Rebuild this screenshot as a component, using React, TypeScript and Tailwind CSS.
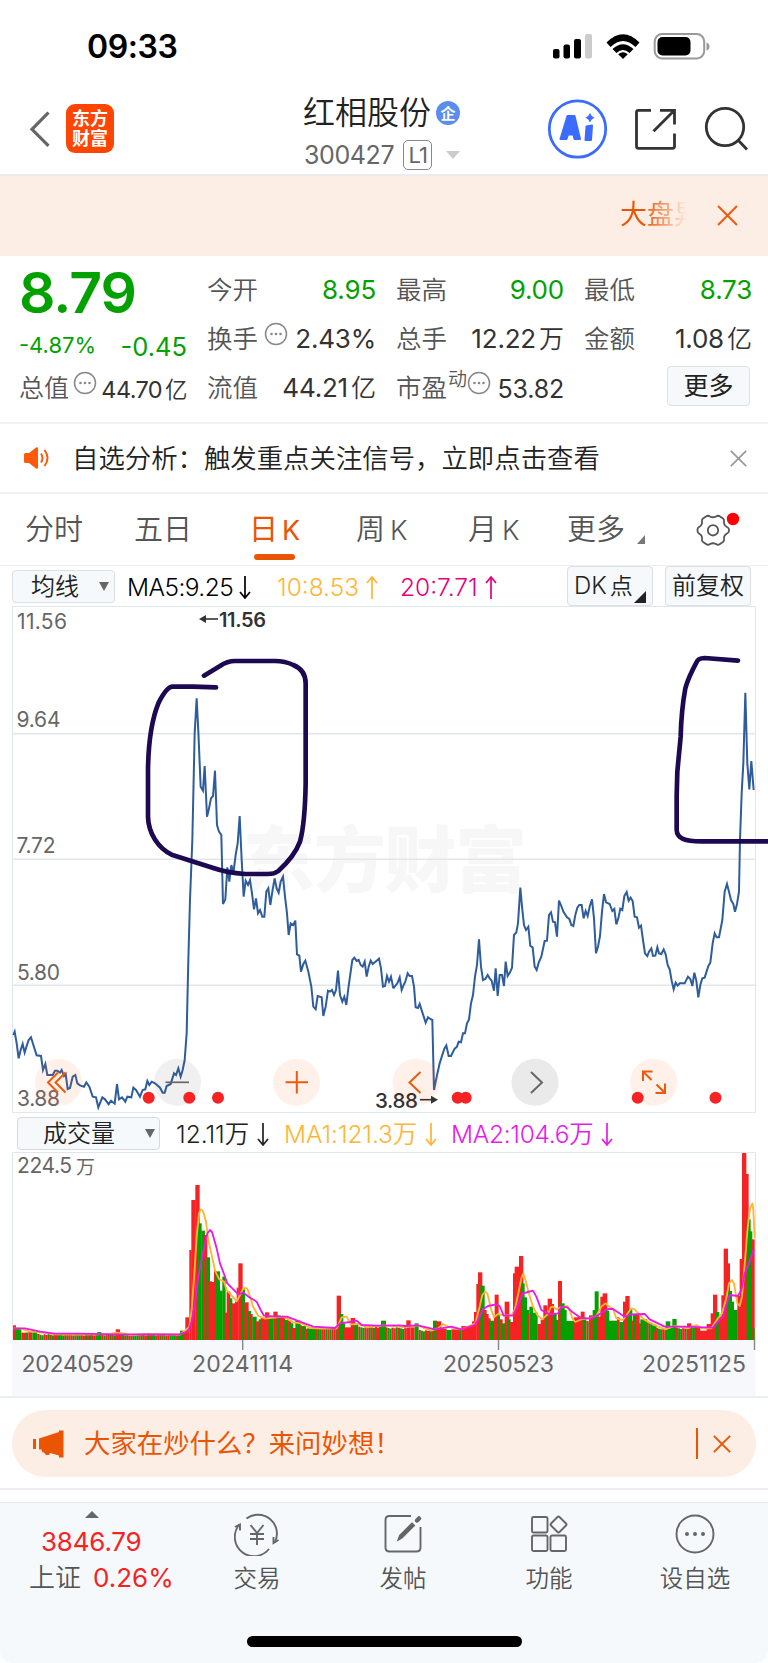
import type {ReactNode} from "react";

// Chart coordinates are kept at three units per pixel.
type Bar = [number, number, number, "r" | "g" | "m"];

const PRICE_LEFT =
    "40,525 44,515 50,550 56,595 62,570 68,552 74,578 80,558 86,540 93,532 100,555 110,586 123,588 129,630 136,612 142,645 158,645 165,632 172,632 180,638 185,630 192,648 197,642 203,687 210,684 218,650 226,645 232,670 240,676 252,680 259,667 268,680 278,710 288,712 295,742 307,712 315,718 326,733 333,722 344,731 351,672 357,718 366,712 376,725 382,710 394,712 400,683 408,690 420,710 428,690 436,688 442,663 448,675 455,665 465,670 480,683 488,698 494,698 500,678 512,672 522,640 528,645 535,625 542,650 548,630 554,600 560,520 565,300 570,120 577,-60 584,-380 590,-485 595,-385 602,-220 609,-208 614,-282 621,-130 626,-150 633,-185 639,-192 645,-268 651,-105 657,-85 664,-75 669,132 676,118 682,22 688,65 694,15 700,40 707,-15 713,-50 719,-132 725,0 731,110 737,62 744,75 750,60 756,100 762,148 768,115 774,160 780,150 787,170 793,170 799,95 805,85 811,135 817,95 824,55 830,85 836,98 842,65 849,50 855,110 861,160 866,225 872,190 880,195 886,182 891,283 898,287 903,335 910,312 916,302 925,335 934,380 940,440 947,448 953,408 965,412 970,468 977,440 984,392 990,395 996,390 1002,405 1008,390 1014,332 1020,405 1027,425 1033,410 1039,435 1045,385 1050,350 1057,300 1063,293 1070,303 1076,300 1082,315 1088,320 1094,305 1100,350 1106,320 1112,302 1118,312 1130,302 1137,296 1143,325 1149,380 1155,378 1161,348 1167,365 1173,350 1180,385";

const PRICE_RIGHT =
    "76,385 88,370 95,352 101,390 107,375 112,365 119,340 125,348 132,348 138,380 143,442 150,444 155,432 164,460 173,488 180,472 187,477 193,480 198,690 204,660 215,610 229,566 235,556 242,588 249,588 260,566 267,560 272,545 279,547 285,520 291,520 297,490 303,478 309,430 315,405 321,350 327,315 333,238 339,320 345,360 352,357 359,345 365,355 371,362 378,392 383,325 389,408 395,345 402,345 408,378 413,305 419,348 426,337 432,323 438,225 445,217 450,190 457,83 462,140 468,195 474,210 481,200 487,258 494,262 500,320 506,330 512,308 520,290 530,243 537,242 543,165 549,157 555,185 561,187 567,230 573,122 580,138 586,155 597,172 604,177 610,195 616,198 622,165 628,143 634,135 641,135 647,175 653,153 659,168 665,140 672,118 678,175 684,280 690,260 696,228 702,155 708,102 714,127 725,132 733,153 739,147 745,193 751,175 757,146 763,150 769,108 776,96 782,122 788,113 794,123 800,170 807,172 813,203 819,197 825,240 831,280 838,288 843,275 850,265 855,288 862,287 868,262 873,280 880,282 887,268 893,283 899,315 905,328 911,362 917,388 923,368 929,377 935,370 950,370 960,350 967,357 973,378 979,338 985,362 991,412 997,375 1003,355 1010,353 1021,318 1027,308 1034,250 1040,220 1046,232 1053,232 1063,180 1070,95 1077,72 1083,95 1089,120 1096,132 1101,155 1107,132 1113,95 1116,-60 1121,-200 1126,-290 1132,-502 1138,-290 1144,-212 1150,-297 1157,-210";

const BARS_LEFT: Bar[] = [
    [39, 48, 646, "r"], [48, 64, 655, "g"], [64, 85, 668, "r"], [76, 82, 668, "g"], [85, 97, 666, "r"], [97, 112, 666, "g"],
    [112, 540, 674, "m"], [292, 304, 666, "g"], [347, 360, 658, "r"], [540, 552, 662, "g"], [552, 558, 662, "r"],
    [556, 568, 622, "r"], [568, 575, 420, "r"], [574, 587, 270, "r"], [586, 599, 225, "r"], [594, 605, 340, "g"],
    [604, 615, 362, "g"], [612, 622, 375, "r"], [619, 630, 442, "g"], [625, 636, 514, "r"], [635, 645, 516, "r"],
    [642, 648, 480, "r"], [647, 660, 484, "g"], [660, 668, 542, "g"], [667, 677, 500, "g"], [674, 681, 608, "r"],
    [680, 691, 545, "r"], [688, 697, 565, "g"], [694, 706, 580, "r"], [705, 712, 575, "r"], [710, 716, 533, "r"],
    [715, 728, 460, "r"], [723, 735, 538, "g"], [733, 746, 577, "r"], [743, 753, 603, "g"], [749, 758, 612, "r"],
    [757, 770, 620, "g"], [768, 778, 634, "r"], [776, 784, 628, "g"], [782, 796, 624, "r"], [795, 808, 607, "r"],
    [806, 821, 622, "g"], [820, 833, 605, "r"], [830, 842, 616, "g"], [840, 855, 618, "r"], [853, 866, 630, "g"],
    [864, 874, 632, "r"], [870, 880, 640, "g"], [876, 888, 654, "r"], [886, 902, 632, "g"], [900, 906, 646, "r"],
    [904, 918, 648, "g"], [914, 925, 656, "r"], [922, 945, 655, "g"], [945, 1012, 655, "m"], [1010, 1023, 557, "r"],
    [1020, 1030, 612, "g"], [1028, 1035, 640, "g"], [1032, 1053, 652, "r"], [1052, 1066, 624, "r"], [1063, 1075, 645, "g"],
    [1075, 1145, 652, "m"], [1143, 1158, 632, "g"], [1156, 1200, 654, "m"],
];

const BARS_RIGHT: Bar[] = [
    [90, 116, 655, "m"], [115, 128, 631, "r"], [128, 140, 652, "r"], [140, 152, 640, "g"], [152, 196, 662, "m"],
    [195, 207, 632, "g"], [205, 220, 634, "r"], [218, 236, 656, "r"], [235, 250, 660, "g"], [250, 276, 658, "r"],
    [275, 281, 656, "g"], [280, 313, 648, "r"], [312, 320, 634, "r"], [318, 326, 606, "r"], [325, 333, 522, "r"],
    [330, 343, 487, "r"], [337, 350, 527, "g"], [347, 356, 600, "r"], [354, 362, 612, "r"], [360, 368, 625, "r"],
    [366, 380, 632, "g"], [378, 384, 620, "r"], [380, 392, 554, "r"], [387, 396, 612, "g"], [394, 404, 628, "r"],
    [402, 412, 640, "g"], [410, 424, 575, "r"], [419, 428, 628, "g"], [426, 436, 636, "r"], [435, 442, 490, "r"],
    [440, 454, 470, "r"], [453, 466, 438, "r"], [460, 470, 520, "g"], [468, 477, 562, "g"], [475, 484, 600, "g"],
    [478, 484, 612, "r"], [484, 495, 590, "g"], [493, 509, 608, "g"], [508, 520, 642, "r"], [518, 528, 630, "r"],
    [526, 538, 586, "r"], [534, 541, 605, "g"], [539, 552, 566, "r"], [550, 558, 582, "r"], [554, 566, 612, "g"],
    [562, 572, 630, "g"], [570, 582, 513, "r"], [577, 590, 580, "g"], [588, 596, 600, "g"], [593, 620, 633, "g"],
    [618, 632, 622, "r"], [630, 640, 620, "r"], [638, 650, 605, "r"], [644, 655, 622, "g"], [655, 665, 635, "m"],
    [663, 675, 616, "r"], [674, 684, 600, "g"], [680, 692, 544, "g"], [690, 700, 620, "r"], [697, 706, 560, "r"],
    [704, 718, 550, "r"], [712, 724, 602, "g"], [722, 748, 632, "g"], [747, 755, 622, "r"], [754, 768, 636, "g"],
    [765, 775, 575, "r"], [772, 785, 558, "r"], [779, 793, 598, "g"], [790, 800, 632, "r"], [795, 805, 615, "g"],
    [803, 815, 612, "r"], [810, 822, 640, "r"], [817, 838, 628, "g"], [836, 852, 640, "m"], [850, 866, 646, "g"],
    [858, 866, 665, "r"], [864, 895, 656, "m"], [893, 907, 634, "g"], [905, 915, 650, "g"], [913, 926, 627, "g"],
    [924, 957, 655, "m"], [957, 970, 640, "r"], [962, 997, 652, "m"], [995, 1018, 662, "r"], [1016, 1030, 642, "r"],
    [1028, 1038, 610, "r"], [1035, 1048, 554, "r"], [1043, 1054, 606, "g"], [1052, 1062, 620, "r"], [1060, 1068, 556, "r"],
    [1067, 1080, 416, "r"], [1075, 1086, 460, "r"], [1080, 1092, 543, "g"], [1088, 1098, 575, "g"], [1096, 1109, 600, "g"],
    [1108, 1116, 558, "r"], [1115, 1124, 447, "r"], [1122, 1135, 129, "r"], [1133, 1142, 192, "r"], [1136, 1148, 328, "g"],
    [1145, 1153, 364, "g"], [1150, 1160, 388, "r"], [1154, 1160, 655, "g"],
];

const MA1_LEFT =
    "40,655 60,655 90,665 130,668 165,673 240,674 330,672 350,668 370,670 390,675 440,672 540,674 555,662 568,650 575,600 583,490 590,380 597,310 601,300 604,298 608,302 611,310 618,335 625,390 635,435 646,485 658,508 672,515 680,540 700,562 710,574 720,555 728,538 735,534 742,536 750,560 760,592 775,618 795,626 830,622 850,620 880,637 905,640 930,654 970,656 1010,655 1018,638 1025,622 1040,620 1052,643 1075,642 1100,652 1150,646 1200,650";
const MA1_RIGHT =
    "96,650 110,652 150,646 170,655 190,662 210,655 225,642 245,652 280,658 322,640 335,590 343,555 352,545 358,550 370,600 378,622 390,612 410,617 430,615 440,600 450,555 460,505 466,490 474,515 482,548 495,590 508,615 522,628 540,612 548,592 555,590 565,598 578,592 598,588 606,605 615,628 622,636 640,628 665,625 685,618 700,590 712,580 722,588 735,597 745,625 765,630 778,612 790,595 800,598 815,615 830,630 850,640 870,650 892,658 920,648 945,652 960,655 985,645 1000,655 1030,655 1050,625 1062,610 1075,565 1083,520 1092,510 1098,520 1108,580 1115,588 1122,560 1130,465 1138,365 1145,300 1153,280 1156,300 1160,385";
const MA2_LEFT =
    "40,655 75,655 120,665 165,671 240,671 340,673 540,673 565,663 575,635 585,580 595,500 610,425 622,370 630,360 636,366 650,415 660,460 672,492 682,520 700,538 715,553 730,548 748,562 770,575 782,600 792,617 830,620 860,620 900,635 940,650 1005,654 1020,640 1050,636 1070,632 1085,645 1130,647 1200,646";
const MA2_RIGHT =
    "96,646 110,648 150,646 200,658 250,650 280,658 320,645 330,630 345,598 360,588 385,583 395,588 407,617 435,617 450,585 465,550 480,546 495,542 505,560 520,600 545,613 570,610 580,590 598,592 612,605 640,625 670,625 690,615 720,597 735,597 770,620 790,613 830,612 845,628 870,640 890,650 950,650 1035,653 1050,635 1065,620 1075,585 1085,555 1110,558 1120,540 1130,490 1145,455 1155,422 1160,422";

const FONT = "Inter, 'Noto Sans CJK SC', sans-serif";
const STRIPES = "rggrrgrgrrgggrgrrg";

function barRects(bars: Bar[]) {
    return bars.flatMap(([x0, x1, top, kind]) => {
        if (kind !== "m") return [{x: x0, w: x1 - x0, top, up: kind === "r"}];
        const out = [];
        for (let x = x0, i = 0; x < x1; x += 6.2, i++) {
            out.push({
                x,
                w: Math.min(6.4, x1 - x),
                top: top + ((i * 7) % 5) - 2,
                up: STRIPES[i % STRIPES.length] === "r",
            });
        }
        return out;
    });
}

function Bars({bars}: { bars: Bar[] }) {
    return (
        <>
            {barRects(bars).map((b, i) => (
                <rect key={i} x={b.x} y={b.top} width={b.w} height={690 - b.top} fill={b.up ? "#f52323" : "#03a100"}/>
            ))}
        </>
    );
}

function Label({x, y, w, size = 21, fill = "#666", weight = 400, children}: {
    x: number; y: number; w: number; size?: number; fill?: string; weight?: number; children: string;
}) {
    return (
        <text x={x} y={y} textLength={w} fontSize={size} fill={fill} fontWeight={weight} fontFamily={FONT}>
            {children}
        </text>
    );
}

function PriceChart() {
    const knobs = [
        {x: 58.5, fill: "rgba(255,110,40,0.1)"},
        {x: 177.5, fill: "rgba(90,90,90,0.09)"},
        {x: 296.5, fill: "rgba(255,110,40,0.1)"},
        {x: 416, fill: "rgba(255,110,40,0.1)"},
        {x: 535, fill: "rgba(90,90,90,0.13)"},
        {x: 653.5, fill: "rgba(255,110,40,0.1)"},
    ];
    return (
        <svg width="768" height="507" viewBox="0 606 768 507" className="block">
            <text x="243" y="886" textLength="284" fontSize="72" fontWeight="900" fill="#f7f7f8" fontFamily={FONT}>东方财富</text>
            <g fill="none" stroke="#e1e6ea">
                <rect x="12.5" y="606.5" width="743" height="506"/>
                <path d="M12 733.7H755M12 859.3H755M12 985.2H755" stroke="#e2e6ee" strokeWidth="1.4"/>
            </g>
            <Label x={17} y={629} w={50}>11.56</Label>
            <Label x={16.5} y={726.5} w={44}>9.64</Label>
            <Label x={16.5} y={853} w={39}>7.72</Label>
            <Label x={17} y={979.5} w={43}>5.80</Label>
            <Label x={17} y={1105.5} w={43}>3.88</Label>
            <Label x={219} y={626.5} w={47} size={20} fill="#333" weight={600}>11.56</Label>
            <path d="M203 619h15" stroke="#333" strokeWidth="1.6"/>
            <path d="M199 619l7-4v8z" fill="#333"/>
            <g transform="translate(0 860) scale(.33333)" fill="none" stroke="#2f5c9b" strokeWidth="6" strokeLinejoin="miter">
                <polyline points={PRICE_LEFT}/>
                <polyline points={PRICE_RIGHT} transform="translate(1104 0)"/>
            </g>
            {knobs.map((k) => (
                <circle key={k.x} cx={k.x} cy="1082.3" r="23.5" fill={k.fill}/>
            ))}
            <Label x={375} y={1107.5} w={43} size={20.5} fill="#333" weight={500}>3.88</Label>
            <path d="M420 1099.7h13" stroke="#333" strokeWidth="1.6"/>
            <path d="M438 1099.7l-7-4v8z" fill="#333"/>
            <g fill="none" stroke="#ed5a0c" strokeWidth="2">
                <path d="M58 1072.5l-10 10 10 10M65.5 1072.5l-10 10 10 10"/>
                <path d="M285.5 1082.3h22.5M296.8 1071v22.5"/>
                <path d="M420.5 1072l-11 10.5 11 10.5"/>
                <path d="M652.5 1071.5H643v9.5M643.5 1072l8 8M655.5 1093h9.5v-9.5M664.5 1092.5l-8-8"/>
            </g>
            <g fill="none" stroke="#666" strokeWidth="1.7">
                <path d="M165.5 1082.3h23.5"/>
                <path d="M531 1072l11 10.5-11 10.5" strokeWidth="2"/>
            </g>
            {[148.7, 189.3, 218, 457.7, 465.7, 637.7, 715.5].map((x) => (
                <circle key={x} cx={x} cy="1097.7" r="6" fill="#f52323"/>
            ))}
            <g transform="translate(0 600) scale(.33333)" fill="none" stroke="#1c0951" strokeWidth="14" strokeLinecap="round" strokeLinejoin="round">
                <path d="M612 227L660 198Q682 183 705 183H825Q855 183 880 195Q917 210 917 250V550Q915 670 900 725C885 765 855 795 835 813Q822 823 800 822H735Q680 818 640 804L515 764C475 745 445 700 444 650V510C445 430 455 360 475 310Q500 260 518 260H580L648 262"/>
                <path d="M2214 182L2114 174Q2094 174 2089 188Q2064 235 2056 265C2044 330 2043 370 2042 410L2032 515L2030 590V690C2031 715 2054 724 2104 724H2320"/>
            </g>
        </svg>
    );
}

function VolumeChart() {
    return (
        <svg width="768" height="244" viewBox="0 1152 768 244" className="block">
            <rect x="12" y="1340" width="743.5" height="56" fill="#f7f8fb"/>
            <path d="M12.5 1340V1152.5H755.5V1340" fill="none" stroke="#e1e6ea"/>
            <g transform="translate(0 1110) scale(.33333)">
                <Bars bars={BARS_LEFT}/>
                <g transform="translate(1104 0)"><Bars bars={BARS_RIGHT}/></g>
                <g fill="none" strokeWidth="5.5" strokeLinejoin="round">
                    <polyline points={MA1_LEFT} stroke="#ffb534"/>
                    <polyline points={MA1_RIGHT} stroke="#ffb534" transform="translate(1104 0)"/>
                    <polyline points={MA2_LEFT} stroke="#e81ae8"/>
                    <polyline points={MA2_RIGHT} stroke="#e81ae8" transform="translate(1104 0)"/>
                </g>
            </g>
            <Label x={17} y={1173} w={55}>224.5</Label>
            <Label x={76} y={1173.5} w={19} size={19}>万</Label>
            <path d="M242.7 1340v10M498.5 1340v10M754.5 1340v10" stroke="#888" strokeWidth="1.4"/>
            <Label x={21.5} y={1372} w={112} size={23}>20240529</Label>
            <Label x={192} y={1372} w={101} size={23}>20241114</Label>
            <Label x={443} y={1372} w={111} size={23}>20250523</Label>
            <Label x={642} y={1372} w={104} size={23}>20251125</Label>
        </svg>
    );
}

function StatusBar() {
    return (
        <div className="flex h-[92px] items-center justify-between pl-[87px] pr-[58px]">
            <span className="mt-[2px] text-[32px] leading-none font-semibold tracking-[-0.4px] text-black">09:33</span>
            <svg width="158" height="30" viewBox="552 30 158 30">
                <rect x="553" y="48" width="6.5" height="9.5" rx="2"/>
                <rect x="563.5" y="43.5" width="6.5" height="14" rx="2"/>
                <rect x="574" y="38" width="7" height="19.5" rx="2"/>
                <rect x="585" y="33" width="7" height="24.5" rx="2" fill="#ccc"/>
                <path d="M606.5 41.5Q623 25 639.5 41.5l-4 4.5Q623 34 610.5 46z"/>
                <path d="M612.5 48Q623 38.5 633.5 48l-4 4Q623 46 616.5 52z"/>
                <path d="M618.2 53.2Q623 49.5 627.8 53.2L623 58z"/>
                <rect x="654.7" y="33" width="49.5" height="24.5" rx="7.5" fill="none" stroke="#999" strokeWidth="2"/>
                <rect x="657.5" y="36" width="33" height="18.5" rx="5"/>
                <path d="M706.5 41.5q3 1 3 4t-3 4z" fill="#999"/>
            </svg>
        </div>
    );
}

function Header() {
    return (
        <header className="flex h-[84px] items-start border-b-2 border-[#ececee]">
            <svg width="24" height="40" viewBox="0 0 24 40" className="mt-[17px] ml-[28px] shrink-0" fill="none" stroke="#666" strokeWidth="3.2">
                <path d="M20.5 3.5L4 20.3l16.5 16.5"/>
            </svg>
            <div className="mt-[12px] ml-[14px] flex h-[49px] w-[48px] shrink-0 flex-col items-center justify-center rounded-[9px] bg-[#ff4500] text-[18px] leading-[20px] font-bold text-white">
                <span>东方</span>
                <span>财富</span>
            </div>
            <div className="mt-[1px] ml-[189px] w-[243px] shrink-0">
                <div className="flex h-[40px] items-center">
                    <span className="text-[32px] leading-none font-[350] text-[#222]">红相股份</span>
                    <span className="ml-[5px] flex size-[24px] items-center justify-center rounded-full bg-[#5b8def] text-[15px] leading-none font-bold text-white">企</span>
                </div>
                <div className="mt-[6px] flex h-[32px] items-center text-[#666]">
                    <span className="ml-[1px] text-[25px] leading-none tracking-[-0.4px]">300427</span>
                    <span className="ml-[9px] flex h-[30px] w-[29px] items-center justify-center rounded-[5px] border border-[#888] text-[22px] leading-none tracking-[-1px]">L1</span>
                    <svg width="14" height="8" className="ml-[14px]" fill="#ccc">
                        <path d="M0 0h14L7 8z"/>
                    </svg>
                </div>
            </div>
            <svg width="204" height="62" viewBox="546 98 204 62" className="mt-[6px] shrink-0" fill="none">
                <circle cx="577.5" cy="129" r="28.2" stroke="#3c6bff" strokeWidth="2.8"/>
                <path d="M560.5 139l7-23h7l5.5 23h-5.500l-1-4.500h-5.500l-1.500 4.500zM569.500 130.500h3l-1-6z" fill="#3c6bff" stroke="#3c6bff" strokeWidth="2" strokeLinejoin="round" fillRule="evenodd"/>
                <path d="M586.500 126.500l5.500-1-1 14.500h-5.500z" fill="#3c6bff" stroke="#3c6bff" strokeWidth="2" strokeLinejoin="round"/>
                <path d="M590 113q1.200 3.500 4.500 4.700-3.300 1.300-4.500 4.800-1.200-3.500-4.500-4.800 3.300-1.200 4.500-4.700z" fill="#3c6bff"/>
                <g stroke="#333" strokeWidth="2.8">
                    <path d="M651 110.300H638.500q-2 0-2 2v34q0 2 2 2h34q2 0 2-2V133.500"/>
                    <path d="M660 110.300H674.500V124.500M674 110.800l-20.500 20.500"/>
                    <circle cx="725" cy="127" r="18.700"/>
                    <path d="M737.500 139.500l9.500 10"/>
                </g>
            </svg>
        </header>
    );
}

function Cross({size, color, width = 2}: { size: number; color: string; width?: number }) {
    return (
        <svg width={size} height={size} viewBox="0 0 20 20" fill="none" stroke={color} strokeWidth={width}>
            <path d="M1 1l18 18M19 1L1 19"/>
        </svg>
    );
}

function Dots() {
    return (
        <svg width="24" height="24" viewBox="0 0 24 24" className="-mt-[10px] shrink-0">
            <circle cx="12" cy="12" r="10.500" fill="none" stroke="#888" strokeWidth="1.500"/>
            <g fill="#888">
                <circle cx="7.500" cy="12" r="1.300"/>
                <circle cx="12" cy="12" r="1.300"/>
                <circle cx="16.500" cy="12" r="1.300"/>
            </g>
        </svg>
    );
}

function Cell({label, value, green}: { label: ReactNode; value: ReactNode; green?: boolean }) {
    return (
        <div className="flex h-[49px] items-center justify-between whitespace-nowrap">
            <span className="-ml-px flex items-center text-[25.500px] leading-none font-[350] text-[#555]">{label}</span>
            <span className={`flex items-baseline text-[26px] leading-none tracking-[-0.200px] ${green ? "text-[#03a100]" : "text-[#333]"}`}>
                {value}
            </span>
        </div>
    );
}

function Cn({children}: { children: string }) {
    return <span className="ml-[3px] text-[25px] font-[350] tracking-normal">{children}</span>;
}

function Quote() {
    return (
        <section className="flex h-[166px] gap-[21px] pl-[20px]">
            <div className="w-[167px] whitespace-nowrap">
                <div className="mt-[6px] -ml-[1px] flex h-[60px] items-center text-[57px] leading-none font-semibold tracking-[-1px] text-[#03a100]">8.79</div>
                <div className="mt-[2px] -ml-px flex h-[42px] items-center justify-between leading-none text-[#03a100]">
                    <span className="text-[22px]">-4.87%</span>
                    <span className="mt-[3px] text-[25.500px]">-0.45</span>
                </div>
                <div className="-ml-px flex h-[44px] items-center justify-between">
                    <span className="text-[25px] leading-none font-[350] text-[#555]">总值</span>
                    <Dots/>
                    <span className="mt-[4px] text-[23.500px] leading-none tracking-[-0.600px] text-[#333]">44.70<span className="ml-[3px] text-[22.500px] font-[350]">亿</span></span>
                </div>
            </div>
            <div className="w-[168px] pt-[9px]">
                <Cell label="今开" value="8.95" green/>
                <Cell label={<>换手<span className="ml-[6px] flex"><Dots/></span></>} value="2.43%"/>
                <Cell label="流值" value={<>44.21<Cn>亿</Cn></>}/>
            </div>
            <div className="w-[167px] pt-[9px]">
                <Cell label="最高" value="9.00" green/>
                <Cell label="总手" value={<>12.22<Cn>万</Cn></>}/>
                <Cell
                    label={<>市盈<span className="-mt-[16px] ml-[1px] text-[19px]">动</span><Dots/></>}
                    value={<span className="mt-[3px] text-[25px]">53.82</span>}
                />
            </div>
            <div className="w-[167px] pt-[9px]">
                <Cell label="最低" value="8.73" green/>
                <Cell label="金额" value={<>1.08<Cn>亿</Cn></>}/>
                <button className="mt-[3px] ml-[82px] flex h-[40px] w-[83px] items-center justify-center rounded-[4px] border border-[#dde2e7] bg-[#f5f9fb] text-[25px] leading-none text-[#222]">更多</button>
            </div>
        </section>
    );
}

function Notice() {
    return (
        <div className="flex h-[72px] items-center border-y-2 border-[#f2f2f4] pl-[23px] pr-[21px]">
            <svg width="27" height="24" viewBox="0 0 27 24">
                <path d="M1 8.500Q1 7 2.500 7H6l7-5.500q2-1 2 1v19q0 2-2 1L6 17H2.500Q1 17 1 15.500z" fill="#ff5a0a"/>
                <path d="M18 7.500q3 4.500 0 9M21.500 4q6 8 0 16" fill="none" stroke="#ff5a0a" strokeWidth="2"/>
            </svg>
            <span className="ml-[22px] text-[26.400px] leading-none font-[350] text-[#222]">自选分析：触发重点关注信号，立即点击查看</span>
            <span className="ml-auto"><Cross size={17} color="#999"/></span>
        </div>
    );
}

function Tabs() {
    return (
        <nav className="flex h-[72px] items-start border-b border-[#eeeef0] pt-[20px] pl-[25px] text-[29px] leading-[32px] font-[350] whitespace-nowrap text-[#555]">
            <span className="w-[109px]">分时</span>
            <span className="w-[115px]">五日</span>
            <span className="flex w-[107px] flex-col font-normal text-[#ea5504]">
                <span>日<span className="ml-[4px] text-[27px]">K</span></span>
                <span className="mt-[7px] ml-[5px] h-[6px] w-[41px] rounded-[3px] bg-[#ea5504]"/>
            </span>
            <span className="w-[112px]">周<span className="ml-[5px] text-[27px]">K</span></span>
            <span className="w-[99px]">月<span className="ml-[5px] text-[27px]">K</span></span>
            <span className="flex w-[128px] items-end">更多
                <svg width="8" height="9" className="mb-[2px] ml-[12px]" fill="#777"><path d="M8 0v9H0z"/></svg>
            </span>
            <svg width="48" height="42" viewBox="695 508 48 42" className="-mt-[5px]">
                <g fill="none" stroke="#555" strokeWidth="1.800">
                    <path d="M706 515.500q2-1.500 4 0 3 1.500 6 0 2-1.500 4 0l3 2q1.500 1 1 3-.500 3.500 3 5.500 2 1 2 2.500v1.500q0 1.500-2 2.500-3.500 2-3 5.500.500 2-1 3l-3 2q-2 1.500-4 0-3-1.500-6 0-2 1.500-4 0l-3-2q-1.500-1-1-3 .500-3.500-3-5.500-1.500-1-1.500-2.500v-1.500q0-1.500 1.500-2.500 3.500-2 3-5.500-.500-2 1-3z"/>
                    <circle cx="713" cy="529.300" r="5.200"/>
                </g>
                <circle cx="733" cy="518" r="6.200" fill="#f00"/>
            </svg>
        </nav>
    );
}

function Arrow({up}: { up?: boolean }) {
    return (
        <svg width="12" height="23" viewBox="0 0 12 23" fill="none" stroke="currentColor" strokeWidth="1.700" className="shrink-0">
            <path d={up ? "M6 23V1M1 7l5-6 5 6" : "M6 0v22M1 16l5 6 5-6"}/>
        </svg>
    );
}

function AverageRow() {
    return (
        <div className="flex h-[40px] items-start pl-[12px] text-[24.500px] leading-none whitespace-nowrap">
            <div className="mt-[4px] flex h-[33px] w-[103px] items-center rounded-[4px] border border-[#dbe0e5] bg-[#f5f9fb] pl-[18px] text-[24px] font-[350] text-[#222]">
                均线
                <svg width="10" height="9" className="ml-[20px]" fill="#666"><path d="M0 0h10L5 9z"/></svg>
            </div>
            <div className="mt-[9px] ml-[12px] flex h-[24px] w-[150px] items-center text-black">
                <span className="mr-[6px] font-[350] tracking-[-0.550px]">MA5:9.25</span><Arrow/>
            </div>
            <div className="mt-[9px] flex h-[24px] w-[123px] items-center text-[#ffb534]">
                <span className="mr-[7px] font-[350]">10:8.53</span><Arrow up/>
            </div>
            <div className="mt-[9px] flex h-[24px] w-[167px] items-center text-[#e4007f]">
                <span className="mr-[7px] font-[350]">20:7.71</span><Arrow up/>
            </div>
            <div className="flex h-[40px] w-[86px] items-center rounded-[4px] border border-[#dbe0e5] bg-[#f5f9fb] pl-[6px] font-[350] text-[#222]">
                <span className="text-[24px]">DK</span><span className="ml-[3px] text-[23px]">点</span>
                <svg width="12" height="12" className="mt-[22px] ml-[1px]" fill="#222"><path d="M12 0v12H0z"/></svg>
            </div>
            <div className="ml-[12px] flex h-[40px] w-[86px] items-center justify-center rounded-[4px] border border-[#dbe0e5] bg-[#f5f9fb] text-[24px] font-[350] text-[#222]">
                前复权
            </div>
        </div>
    );
}

function VolumeRow() {
    return (
        <div className="flex h-[39px] items-start pl-[17px] text-[24.500px] leading-none font-[350] whitespace-nowrap">
            <div className="mt-[4px] flex h-[33px] w-[143px] items-center rounded-[4px] border border-[#d5dadf] bg-[#f5f9fb] pl-[25px] text-[24px] text-[#222]">
                成交量
                <svg width="10" height="9" className="ml-[30px]" fill="#666"><path d="M0 0h10L5 9z"/></svg>
            </div>
            <div className="mt-[9px] ml-[16px] flex h-[24px] w-[108px] items-center text-[#222]">
                <span className="mr-[8px]">12.11万</span><Arrow/>
            </div>
            <div className="mt-[9px] flex h-[24px] w-[167px] items-center text-[#ffb534]">
                <span className="mr-[8px] tracking-[-0.100px]">MA1:121.3万</span><Arrow/>
            </div>
            <div className="mt-[9px] flex h-[24px] items-center text-[#e81ae8]">
                <span className="mr-[8px] tracking-[-0.300px]">MA2:104.6万</span><Arrow/>
            </div>
        </div>
    );
}

function AskBar() {
    return (
        <div className="h-[94px] border-y-2 border-[#eceef2] pt-[12px] pl-[12px]">
            <div className="flex h-[67px] w-[743.500px] items-center rounded-full bg-[#fdeee5] pl-[20px] text-[#ea5504]">
                <svg width="32" height="28" viewBox="0 0 32 28" fill="#ea5504">
                    <path d="M1 9h3v10H1zM7 8.500L27 2V.500h4.500v27H27v-2l-9-2.500-1 2h-3l-2-2.500h-1.500l-1-3H7z"/>
                </svg>
                <span className="ml-[20px] text-[26.400px] leading-none">大家在炒什么？来问妙想！</span>
                <span className="ml-auto h-[31px] w-[2px] bg-[#ea5504]"/>
                <span className="mr-[25px] ml-[15px]"><Cross size={18} color="#ea5504" width={2.2}/></span>
            </div>
        </div>
    );
}

function NavItem({label, children}: { label: string; children: ReactNode }) {
    return (
        <div className="flex w-[146px] flex-col items-center">
            <svg width="46" height="44" viewBox="-23 -22 46 44" className="mt-[9px]" fill="none" stroke="#666" strokeWidth="1.900">
                {children}
            </svg>
            <span className="mt-[11px] text-[23.500px] leading-[24px] font-[350] text-[#555]">{label}</span>
        </div>
    );
}

function BottomNav() {
    return (
        <footer className="h-[161px] rounded-b-[12px] border-t border-[#e6e9ec] bg-[#f5f9fb]">
            <div className="flex h-[133px]">
                <div className="flex w-[184px] flex-col">
                    <svg width="14" height="7" className="mt-[8px] ml-[85px]" fill="#666"><path d="M7 0l7 7H0z"/></svg>
                    <span className="mt-[11px] ml-[41px] text-[26px] leading-[26px] tracking-[-0.200px] text-[#f52323]">3846.79</span>
                    <span className="mt-[10px] ml-[29px] flex items-center text-[26px] leading-[26px] font-[350] text-[#555]">上证
                        <span className="ml-[12px] font-normal text-[#f52323]">0.26%</span>
                    </span>
                </div>
                <NavItem label="交易">
                    <path d="M-10.500-15.500A19 19 0 0 1 18 8M12 15A19 19 0 0 1-18-9"/>
                    <path d="M-22-7l5-2.500 0 6M21.500 6l-5 3 0-6"/>
                    <path d="M-6.500-9L0-1l6.500-8M0-1v12M-7 0H7M-7 5H7" strokeWidth="1.900"/>
                </NavItem>
                <NavItem label="发帖">
                    <path d="M8-18H-13.500q-4 0-4 4V13.500q0 4 4 4H13.500q4 0 4-4V-7"/>
                    <path d="M-4.500 5.500L-3 1.500 9-10.500l2 2L-1 3.500z" fill="#666"/>
                    <path d="M14-13.500l2-2" strokeWidth="4.500" strokeLinecap="round"/>
                </NavItem>
                <NavItem label="功能">
                    <rect x="-17" y="-17" width="15.500" height="15.500" rx="1.500"/>
                    <rect x="-17" y="1.500" width="15.500" height="15.500" rx="1.500"/>
                    <rect x="1.500" y="1.500" width="15.500" height="15.500" rx="1.500"/>
                    <path d="M8.500-17q1-1 2 0l6.500 6.500q1 1 0 2L10.500-2q-1 1-2 0L2-8.500q-1-1 0-2z"/>
                </NavItem>
                <NavItem label="设自选">
                    <circle r="18.500"/>
                    <g fill="#666" stroke="none">
                        <circle cx="-8" r="2"/>
                        <circle r="2"/>
                        <circle cx="8" r="2"/>
                    </g>
                </NavItem>
            </div>
            <div className="ml-[247px] h-[11px] w-[275px] rounded-full bg-black"/>
        </footer>
    );
}

export default function App() {
    return (
        <div className="h-[1663px] w-[768px] overflow-hidden bg-white font-[Inter,'Noto_Sans_CJK_SC',sans-serif]">
            <StatusBar/>
            <Header/>
            <div className="flex h-[80px] items-center bg-[#fdeee5] pb-[2px] pl-[620px]">
                <span className="w-[67px] overflow-hidden bg-linear-to-r from-[#ea5504] from-35% to-transparent to-100% bg-clip-text text-[27px] leading-[34px] whitespace-nowrap text-transparent">大盘异</span>
                <span className="ml-[30px]"><Cross size={21} color="#f05a0c" width={1.900}/></span>
            </div>
            <Quote/>
            <Notice/>
            <Tabs/>
            <AverageRow/>
            <PriceChart/>
            <VolumeRow/>
            <VolumeChart/>
            <AskBar/>
            <div className="h-[12px]"/>
            <BottomNav/>
        </div>
    );
}
